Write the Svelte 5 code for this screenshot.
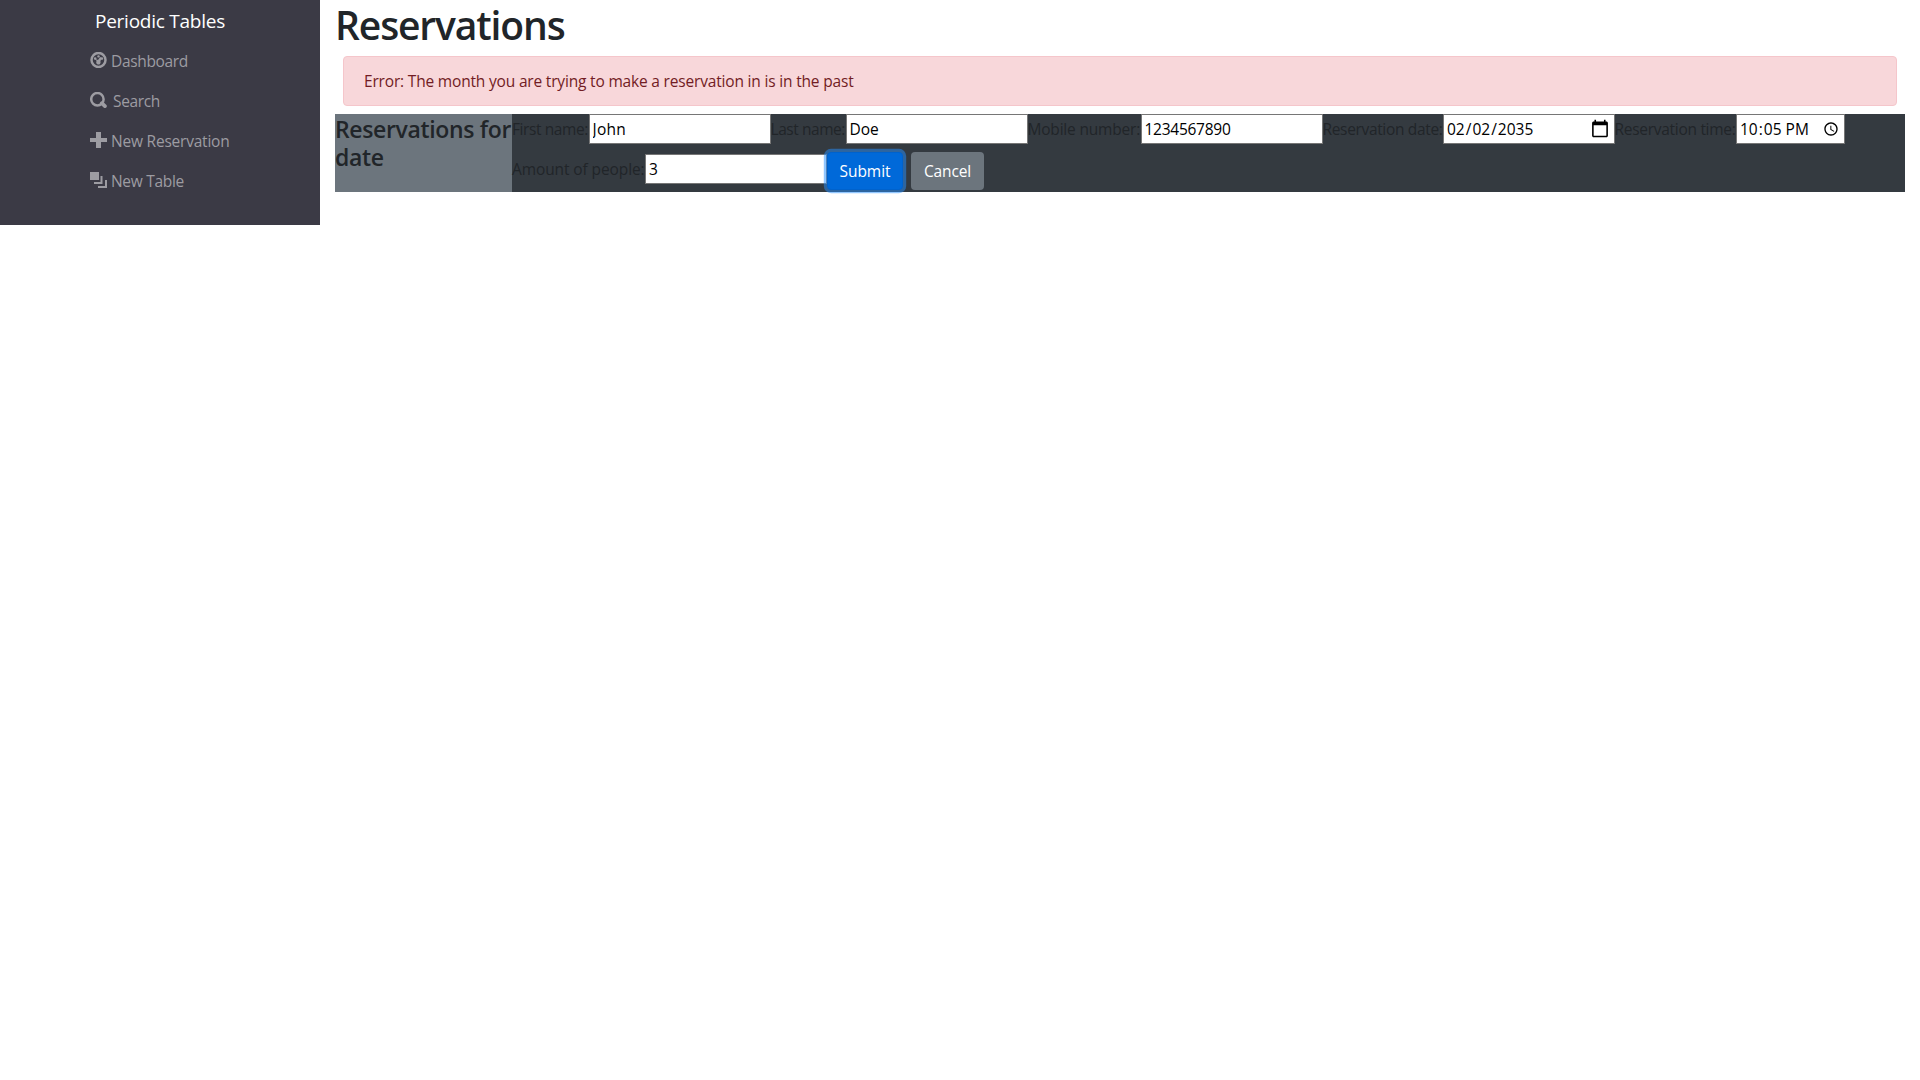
<script>
  const fields = [
    { label: 'First name:', value: 'John', type: 'text', labelWidth: 76.5, textWidth: 33.5, width: 182 },
    { label: 'Last name:', value: 'Doe', type: 'text', labelWidth: 75, textWidth: 29, width: 182 },
    { label: 'Mobile number:', value: '1234567890', type: 'text', labelWidth: 113, textWidth: 86, width: 182 },
    { label: 'Reservation date:', value: '2035-02-02', type: 'date', labelWidth: 120.5, textWidth: 0, width: 171.5 },
    { label: 'Reservation time:', value: '22:05', type: 'time', labelWidth: 121.5, textWidth: 0, width: 109 },
    { label: 'Amount of people:', value: '3', type: 'text', labelWidth: 133, textWidth: 9, width: 182 }
  ];

  // Spreads the letters of an element so that its text takes the given width.
  function fit(node, target) {
    if (!target) return;
    const style = getComputedStyle(node);
    const ctx = document.createElement('canvas').getContext('2d');
    ctx.font = `${style.fontWeight} ${style.fontSize} ${style.fontFamily}`;
    const text = node.value ?? node.textContent.trim();
    node.style.letterSpacing = `${(target - ctx.measureText(text).width) / text.length}px`;
  }
</script>

<div class="layout">
  <nav class="sidebar">
    <div class="brand"><span use:fit={130}>Periodic Tables</span></div>
    <a href="#dashboard">
      <svg viewBox="0 0 17 16"><circle cx="8.5" cy="8" r="7" fill="none" stroke="currentColor" stroke-width="2.5" /><g fill="currentColor"><circle cx="8.5" cy="4.4" r="1.2" /><circle cx="5.2" cy="6.6" r="1.3" /><circle cx="11.9" cy="6.6" r="1.3" /><path d="M5.3 7 8 8 10.200 4.900l1.300.8-1.100 3.800a2.200 2.200 0 1 1-3.800-.4z" /></g></svg>
      <span use:fit={77}>Dashboard</span>
    </a>
    <a href="#search" class="search">
      <svg viewBox="0 0 17 16"><circle cx="7.400" cy="7.200" r="6.200" fill="none" stroke="currentColor" stroke-width="2.5" /><path d="m11.800 11.200 3.100 2.900" stroke="currentColor" stroke-width="3.800" stroke-linecap="round" /></svg>
      <span use:fit={47}>Search</span>
    </a>
    <a href="#reservation">
      <svg viewBox="0 0 17 16"><path d="M6 0h5v6h6v4h-6v6H6v-6H0V6h6z" fill="currentColor" /></svg>
      <span use:fit={118.5}>New Reservation</span>
    </a>
    <a href="#table">
      <svg viewBox="0 0 17 16"><path d="M0 0h9v8H0zM10.500 4h2v8H4v-2h6.500zM15 8h2v8H8v-2h7z" fill="currentColor" /></svg>
      <span use:fit={73}>New Table</span>
    </a>
  </nav>

  <main>
    <h1><span use:fit={229.5}>Reservations</span></h1>
    <div class="alert"><span use:fit={489.5}>Error: The month you are trying to make a reservation in is in the past</span></div>
    <section>
      <h4><span use:fit={176}>Reservations for</span> <span use:fit={48.5}>date</span></h4>
      <form onsubmit={(e) => e.preventDefault()}>
        {#each fields as f}
          <div class="field">
            <label for={f.label} style:width="{f.labelWidth}px"><span use:fit={f.labelWidth - 0.5}>{f.label}</span></label>
            <input id={f.label} class={f.type} type={f.type} value={f.value} style:width="{f.width}px" use:fit={f.textWidth} />
          </div>
        {/each}
        <button class="submit"><span use:fit={51}>Submit</span></button>
        <button class="cancel" type="button"><span use:fit={47}>Cancel</span></button>
      </form>
    </section>
  </main>
</div>

<style>
  :global(body) {
    margin: 0;
    background: #fff;
  }
  .layout {
    display: flex;
    align-items: flex-start;
    font: 400 15.5px/24px 'Open Sans', 'Noto Sans', sans-serif;
    color: #212529;
  }
  span {
    white-space: nowrap;
  }
  .sidebar {
    box-sizing: border-box;
    width: 320px;
    height: 225px;
    padding: 8px 0 0 90px;
    background: #3b3a45;
  }
  .brand {
    height: 33px;
    padding-left: 5px;
    font-size: 19px;
    line-height: 26px;
    color: #fff;
  }
  a {
    display: flex;
    align-items: center;
    gap: 4px;
    height: 40px;
    color: #9d9ca2;
    text-decoration: none;
  }
  a.search {
    gap: 6px;
  }
  svg {
    width: 17px;
    height: 16px;
    margin-bottom: 2px;
  }
  main {
    width: 1570px;
    padding-left: 15px;
  }
  h1,
  h4 {
    margin: 0;
    font-weight: 600;
  }
  h1 {
    height: 56px;
    font-size: 39px;
    line-height: 50px;
  }
  .alert {
    box-sizing: border-box;
    height: 50px;
    margin: 0 8px 8px;
    padding: 12px 20px;
    border: 1px solid #f5c6cb;
    border-radius: 4px;
    background: #f8d7da;
    color: #721c24;
  }
  section {
    display: flex;
    height: 78px;
    background: #343a40;
  }
  h4 {
    box-sizing: border-box;
    width: 177px;
    padding-top: 1px;
    background: #6c757d;
    font-size: 23px;
    line-height: 28px;
  }
  form {
    flex: 1;
    display: flex;
    flex-wrap: wrap;
    align-content: flex-start;
    row-gap: 8px;
  }
  .field {
    display: flex;
    height: 30px;
  }
  .field:nth-child(6) {
    margin-top: 2px;
  }
  label {
    line-height: 30px;
  }
  input {
    box-sizing: border-box;
    height: 30px;
    margin: 0;
    padding: 1px 2px;
    border: 1px solid #767676;
    border-radius: 0;
    background: #fff;
    color: #000;
    font: inherit;
  }
  .text {
    padding-left: 3px;
  }
  .date::-webkit-calendar-picker-indicator {
    width: 20px;
    height: 20px;
  }
  .time::-webkit-calendar-picker-indicator {
    width: 16px;
    height: 16px;
  }
  button {
    box-sizing: border-box;
    height: 38px;
    padding: 0;
    border: 0;
    border-radius: 4px;
    color: #fff;
    font: inherit;
  }
  .submit {
    width: 76px;
    border: 1px solid #0062cc;
    background: #0069d9;
    box-shadow: 0 0 0 3.2px rgba(38, 143, 255, 0.5);
  }
  .cancel {
    width: 73px;
    margin-left: 8px;
    background: #6c757d;
  }
</style>
